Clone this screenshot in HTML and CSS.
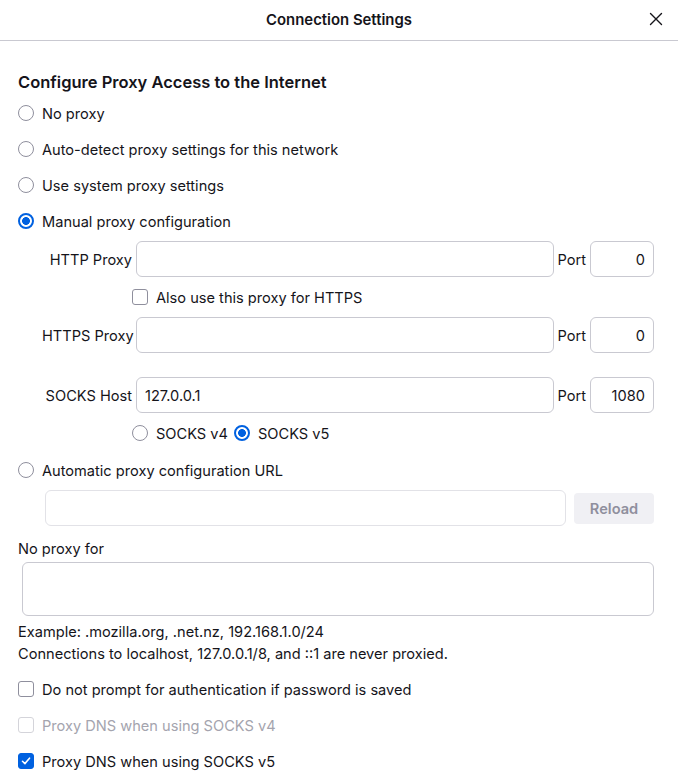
FILE: index.html
```html
<!DOCTYPE html>
<html lang="en">
<head>
<meta charset="utf-8">
<title>Connection Settings</title>
<link rel="stylesheet" href="styles.css">
</head>
<body>
<div class="dialog">
  <header class="titlebar">
    <span></span>
    <h1 class="title">Connection Settings</h1>
    <button class="close" aria-label="Close">
      <svg width="14" height="14" viewBox="0 0 14 14"><path d="M1.5 1.5 L12.5 12.5 M12.5 1.5 L1.5 12.5" stroke="#15141a" stroke-width="1.4" fill="none" stroke-linecap="round"/></svg>
    </button>
  </header>
  <main class="content">
    <h2 class="heading">Configure Proxy Access to the Internet</h2>
    <label class="row"><input type="radio" name="mode" class="radio"><span class="txt">No proxy</span></label>
    <label class="row"><input type="radio" name="mode" class="radio"><span class="txt">Auto-detect proxy settings for this network</span></label>
    <label class="row"><input type="radio" name="mode" class="radio"><span class="txt">Use system proxy settings</span></label>
    <label class="row"><input type="radio" name="mode" class="radio" checked><span class="txt">Manual proxy configuration</span></label>

    <div class="manual">
      <span class="flabel txt">HTTP Proxy</span>
      <input class="field" type="text">
      <span class="plabel txt">Port</span>
      <input class="field port" type="text" value="0">

      <label class="row span3"><input type="checkbox" class="check"><span class="txt">Also use this proxy for HTTPS</span></label>

      <span class="flabel txt">HTTPS Proxy</span>
      <input class="field" type="text">
      <span class="plabel txt">Port</span>
      <input class="field port" type="text" value="0">

      <div class="spacer"></div>

      <span class="flabel txt">SOCKS Host</span>
      <input class="field" type="text" value="127.0.0.1">
      <span class="plabel txt">Port</span>
      <input class="field port" type="text" value="1080">

      <div class="row span3 versions">
        <label class="opt"><input type="radio" name="socks" class="radio"><span class="txt">SOCKS v4</span></label>
        <label class="opt"><input type="radio" name="socks" class="radio" checked><span class="txt">SOCKS v5</span></label>
      </div>
    </div>

    <label class="row auto"><input type="radio" name="mode" class="radio"><span class="txt">Automatic proxy configuration URL</span></label>
    <div class="urlrow">
      <input class="field disabled" type="text" disabled>
      <button class="reload" disabled>Reload</button>
    </div>

    <div class="noproxy-label">No proxy for</div>
    <textarea class="noproxy"></textarea>
    <p class="hint">Example: .mozilla.org, .net.nz, 192.168.1.0/24</p>
    <p class="hint">Connections to localhost, 127.0.0.1/8, and ::1 are never proxied.</p>

    <div class="checks">
      <label class="row"><input type="checkbox" class="check"><span class="txt">Do not prompt for authentication if password is saved</span></label>
      <label class="row dim"><input type="checkbox" class="check" disabled><span class="txt">Proxy DNS when using SOCKS v4</span></label>
      <label class="row"><input type="checkbox" class="check" checked><span class="txt">Proxy DNS when using SOCKS v5</span></label>
    </div>
  </main>
</div>
</body>
</html>
```

FILE: styles.css
```css
* { box-sizing: border-box; }
html, body { margin: 0; padding: 0; background: #ffffff; }
body {
  font-family: Inter, "Noto Sans", "Liberation Sans", sans-serif;
  font-size: 14.6px;
  color: #15141a;
  width: 678px;
  height: 783px;
  overflow: hidden;
}
.dialog { width: 678px; }
.titlebar {
  height: 41px;
  border-bottom: 1px solid #c9c9d1;
  display: grid;
  grid-template-columns: 1fr auto 1fr;
  align-items: center;
}
.title {
  margin: 0;
  font-size: 14.9px;
  font-weight: 600;
  line-height: 20px;
  padding-bottom: 1px;
}
.close {
  justify-self: end;
  margin-right: 14px;
  width: 16px;
  height: 16px;
  padding: 0;
  border: 0;
  background: none;
  display: flex;
  align-items: center;
  justify-content: center;
  margin-bottom: 2px;
}
.content {
  padding: 26px 24px 0 18px;
}
.heading {
  margin: 0;
  height: 28px;
  display: flex;
  align-items: center;
  font-size: 16.5px;
  font-weight: 600;
  padding-top: 1px;
}
.txt { padding-top: 2px; }
.row {
  height: 36px;
  display: flex;
  align-items: center;
  gap: 8px;
}
.radio, .check {
  appearance: none;
  -webkit-appearance: none;
  margin: 0;
  width: 16px;
  height: 16px;
  flex: none;
  border: 1px solid #8f8f9d;
  background: #fff;
}
.radio { border-radius: 50%; }
.radio:checked {
  border: 2px solid #0061e0;
  background: radial-gradient(circle, #0061e0 0 3.6px, #ffffff 4.2px);
}
.check { border-radius: 3px; }
.check:checked {
  border-color: #0061e0;
  background: #0061e0 url("data:image/svg+xml,%3Csvg xmlns='http://www.w3.org/2000/svg' width='16' height='16' viewBox='0 0 16 16'%3E%3Cpath d='M4 8.3 L6.8 11 L12 4.8' stroke='white' stroke-width='1.8' fill='none' stroke-linecap='round' stroke-linejoin='round'/%3E%3C/svg%3E") center/14px 14px no-repeat;
}
.check:disabled { border-color: #d4d4da; }
.dim { color: #a4a4ae; }

.manual {
  display: grid;
  grid-template-columns: 90px 1fr auto 64px;
  column-gap: 4px;
  row-gap: 2px;
  padding-left: 24px;
  margin-top: 2px;
  align-items: center;
}
.flabel { text-align: right; white-space: nowrap; }
.span3 { grid-column: 2 / 5; margin-left: -4px; }
.spacer { grid-column: 1 / 5; height: 20px; }
.field {
  height: 36px;
  border: 1px solid #c9c9d1;
  border-radius: 6px;
  padding: 2px 8px 0;
  font: inherit;
  color: inherit;
  background: #fff;
  width: 100%;
  min-width: 0;
}
.port { text-align: right; }
.versions { gap: 6px; }
.opt { display: flex; align-items: center; gap: 8px; }
.auto { margin-top: 1px; }
.urlrow {
  display: flex;
  align-items: center;
  gap: 8px;
  margin-left: 27px;
  margin-top: 2px;
}
.field.disabled { border-color: #e2e2e7; flex: 1; }
.reload {
  width: 80px;
  height: 31px;
  flex: none;
  border: 0;
  border-radius: 4px;
  background: #f0f0f4;
  color: #8f8f9d;
  font: inherit;
  font-weight: 600;
  padding-top: 2px;
}
.noproxy-label {
  margin-top: 12px;
  height: 20px;
  line-height: 20px;
  padding-top: 1px;
}
.noproxy {
  display: block;
  margin: 4px 0 0 4px;
  width: calc(100% - 4px);
  height: 54px;
  border: 1px solid #c9c9d1;
  border-radius: 6px;
  resize: none;
  font: inherit;
}
.hint {
  margin: 0;
  line-height: 22px;
}
.hint:first-of-type { margin-top: 5px; }
.hint + .hint { margin-bottom: -1px; }
.checks { margin-top: 7px; }
```
